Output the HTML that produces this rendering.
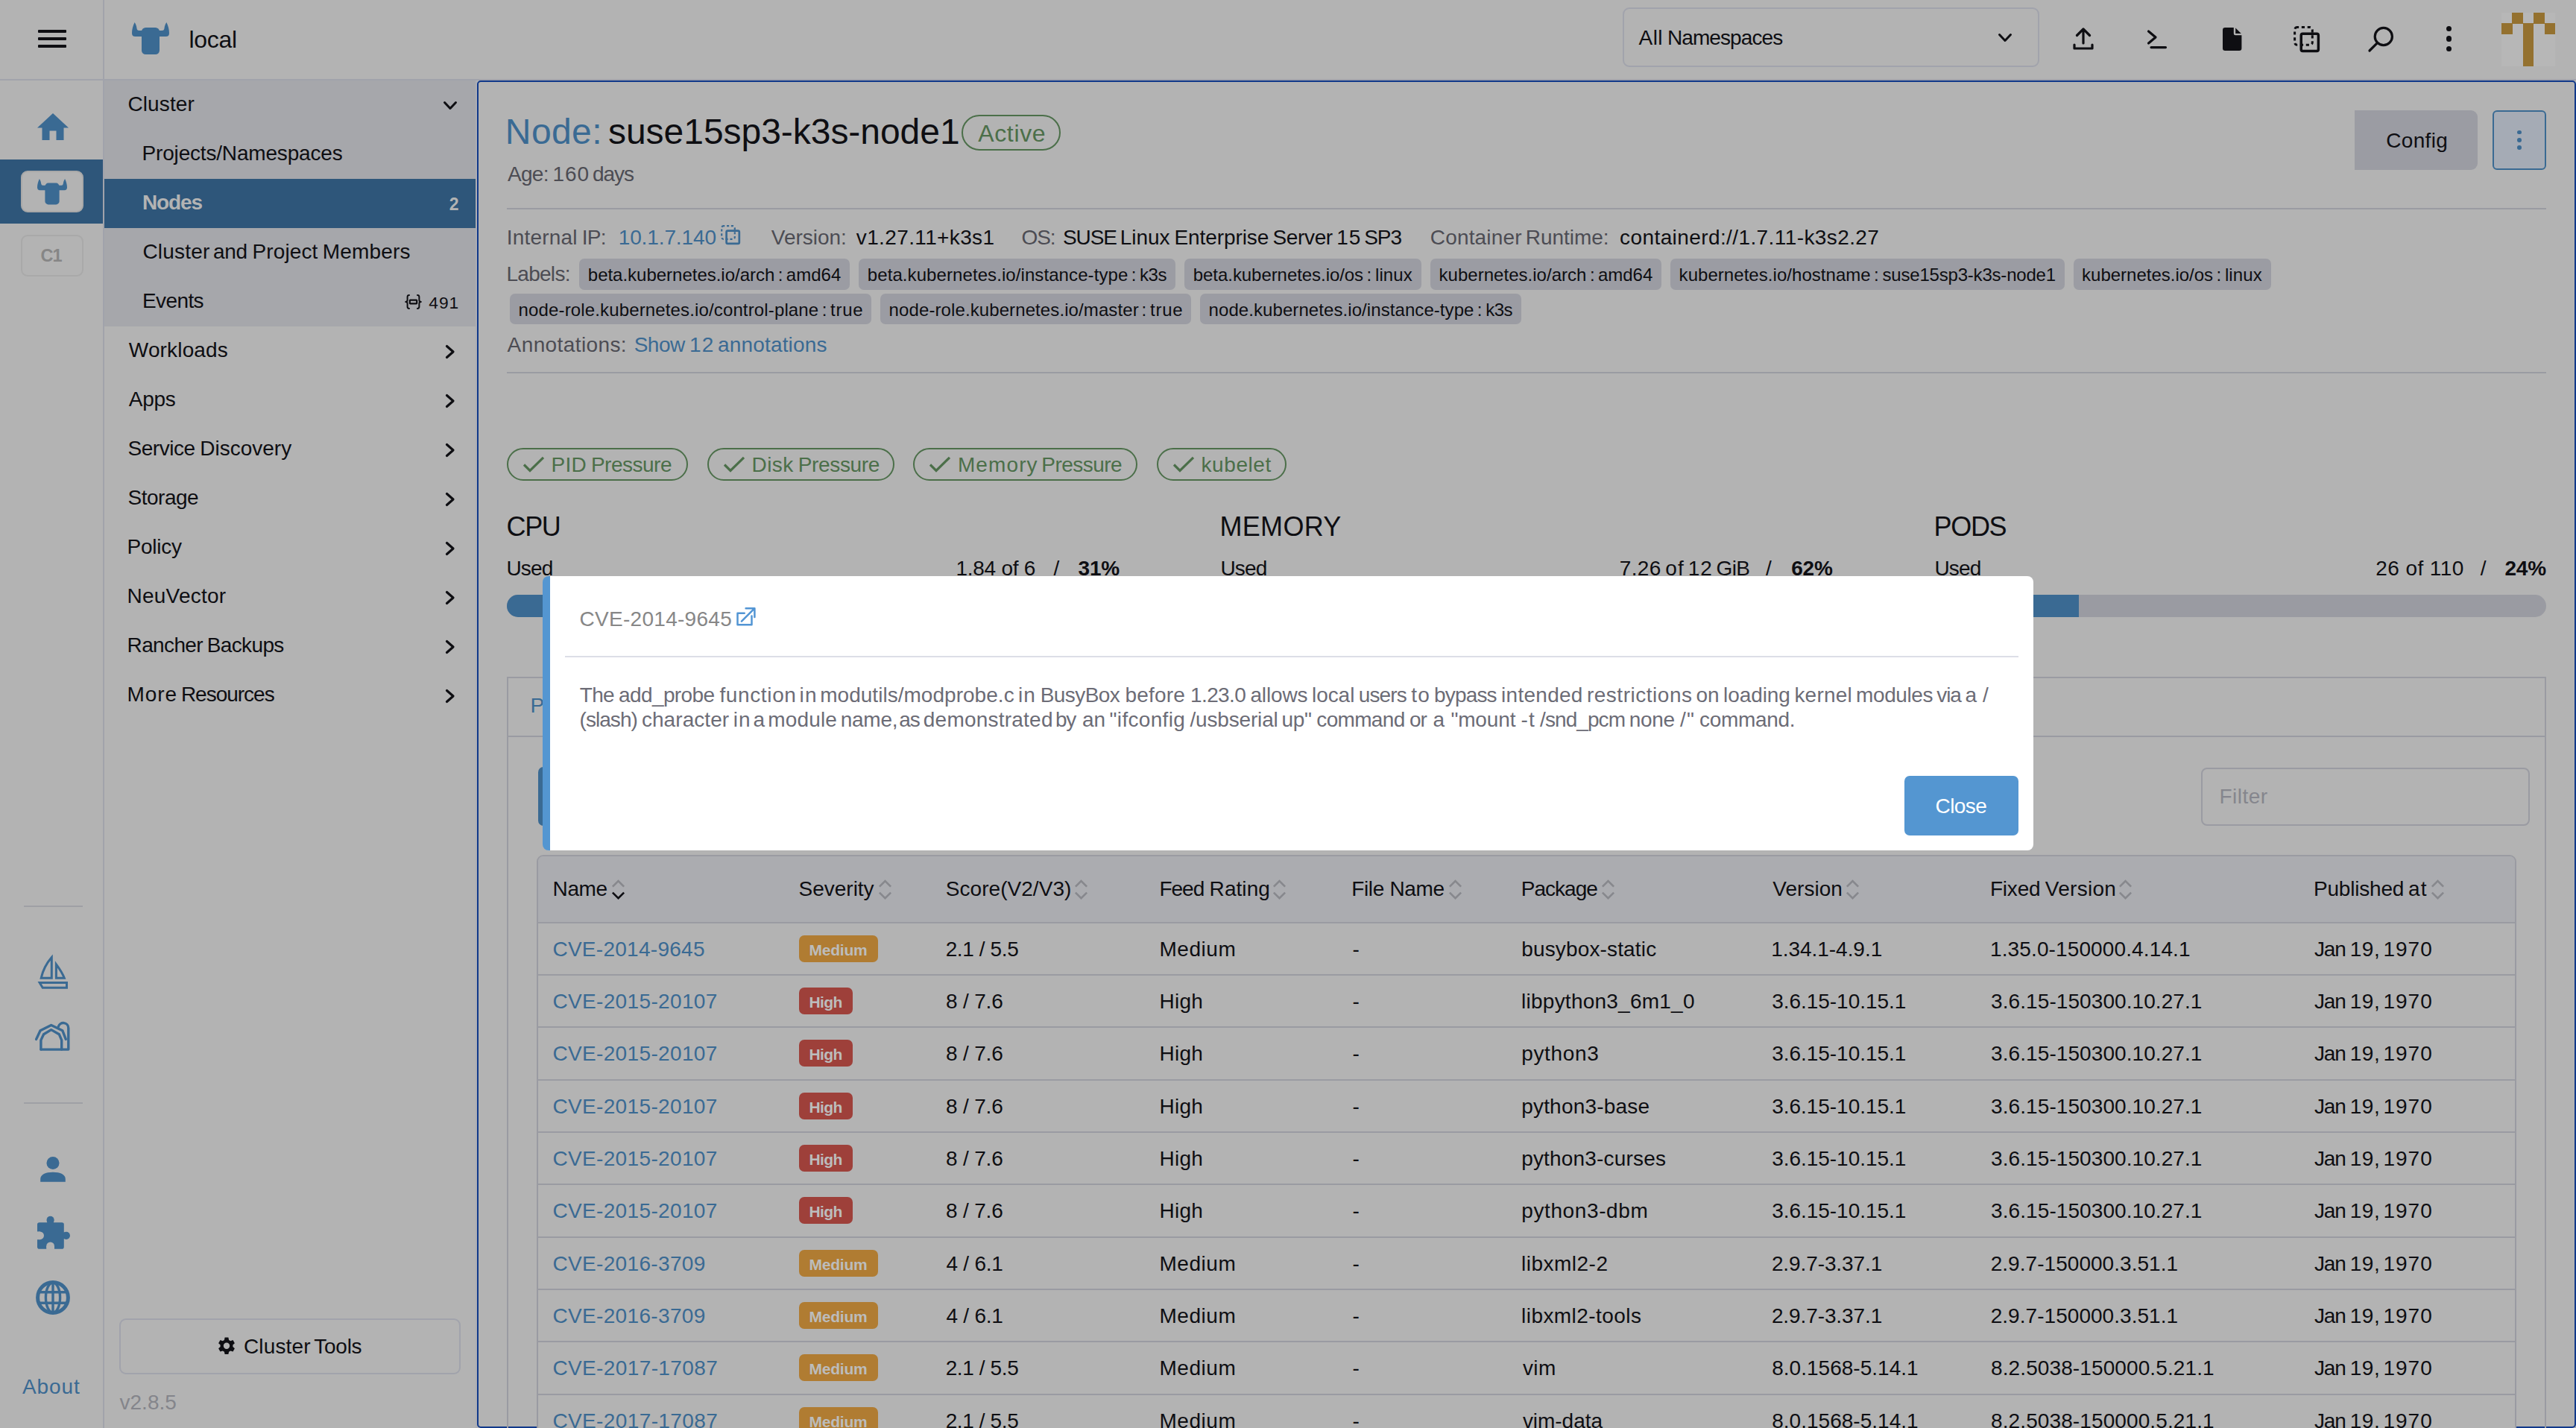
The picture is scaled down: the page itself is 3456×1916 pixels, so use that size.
<!DOCTYPE html>
<html lang="en">
<head>
<meta charset="utf-8">
<title>Rancher - Node: suse15sp3-k3s-node1</title>
<style>
html,body{margin:0;padding:0;}
body{width:3456px;height:1916px;overflow:hidden;background:#b3b3b3;position:relative;
font-family:"Liberation Sans",sans-serif;color:#0e0e12;-webkit-font-smoothing:antialiased;}
#app,#app div,#app span,#app a,#app svg,#app p,#app h1,#app h3,#app button,#app nav,#app header,#app aside,#app main,#app section,#app ul,#app li{position:absolute;margin:0;padding:0;box-sizing:border-box;}
#app{left:0;top:0;width:3456px;height:1916px;overflow:hidden;}
#app span,#app a,#app p,#app h1,#app h3,#app li,#app button{white-space:pre;line-height:1;text-decoration:none;display:block;}
#app h1,#app h3,#app button{font-weight:400;}
#app button{border:0;background:none;font-family:inherit;}
#app ul{list-style:none;}
svg{overflow:visible;}
</style>
</head>
<body>
<div id="app">
<aside style="left:0;top:0;width:140px;height:1916px;border-right:2px solid #a1a3ab;">
<div style="left:51px;top:40px;width:38px;height:4px;background:#0e0e12;border-radius:1px;"></div>
<div style="left:51px;top:50px;width:38px;height:4px;background:#0e0e12;border-radius:1px;"></div>
<div style="left:51px;top:60px;width:38px;height:4px;background:#0e0e12;border-radius:1px;"></div>
<svg style="left:50px;top:152px;" width="42" height="36" viewBox="0 0 42 36"><path d="M21,0 L42,19.5 L35.5,19.5 L35.5,36 L25.5,36 L25.5,23.5 L16.5,23.5 L16.5,36 L6.5,36 L6.5,19.5 L0,19.5 Z" fill="#3a6a93"/></svg>
<div style="left:0px;top:214px;width:138px;height:86px;background:#2e567a;"></div>
<div style="left:28px;top:229px;width:84px;height:56px;background:#b3b3b3;border:2px solid #a8a8a8;border-radius:9px;"></div>
<svg style="left:50px;top:240px;" width="40" height="34.4" viewBox="0 0 50 43"><g fill="#3a6a93"><rect x="13" y="7" width="24" height="36" rx="5.5"/><path d="M3.6,0 C1.4,4.5 0,9.5 0,14.5 Q0,19 4.5,19 L14,19 L14,11 L9.5,11 Q6.8,11 6.5,8 C6.2,5 5.2,2.2 3.6,0 Z"/><path d="M46.4,0 C48.6,4.5 50,9.5 50,14.5 Q50,19 45.5,19 L36,19 L36,11 L40.5,11 Q43.2,11 43.5,8 C43.8,5 44.8,2.2 46.4,0 Z"/></g></svg>
<div style="left:28px;top:315px;width:84px;height:56px;border:2px solid #a9a9a9;border-radius:9px;"></div>
<span style="left:54.4px;top:331.7px;font-size:23.5px;color:#868686;letter-spacing:-0.940px;font-weight:700;">C1</span>
<div style="left:32px;top:1215px;width:79px;height:2px;background:#9fa0a5;"></div>
<div style="left:32px;top:1479px;width:79px;height:2px;background:#9fa0a5;"></div>
<svg style="left:48px;top:1278px;" width="46" height="52" viewBox="0 0 46 52"><g fill="none" stroke="#3a6a93" stroke-width="3" stroke-linejoin="miter"><path d="M21.3,6.5 C13,16 9,26 7.2,34.3 L21.3,34.3 Z"/><path d="M27.4,15.8 C32,22 36,28 38.3,34.3 L27.4,34.3 Z"/><path d="M5.2,40.6 L41.5,40.6 L41.5,47.2 L9.2,47.2 Z"/></g></svg>
<svg style="left:44px;top:1366px;" width="54" height="48" viewBox="0 0 54 48"><g fill="none" stroke="#3a6a93" stroke-width="3.4" stroke-linecap="round" stroke-linejoin="round"><path d="M4.6,28.4 L10.1,16.7 L24.7,9.5 L39.8,16.7 L44.3,28.4"/><path d="M10.9,42.1 L10.9,29.6 L14.6,21.7 L24.7,15.6 L35.3,21.7 L38.7,29.6 L38.7,42.1"/><path d="M34.3,11.4 A6.9,6.9 0 0 1 47.8,13.4 L47.8,42.1 L10.9,42.1"/></g></svg>
<svg style="left:53px;top:1550px;" width="36" height="38" viewBox="0 0 36 38"><g fill="#3a6a93"><circle cx="18" cy="10.6" r="8.5"/><path d="M1.2,35.8 L1.2,32 C1.2,26 8,22.8 18,22.8 C28,22.8 34.8,26 34.8,32 L34.8,35.8 Z"/></g></svg>
<svg style="left:48px;top:1630px;" width="48" height="48" viewBox="0 0 48 48"><g fill="#3a6a93"><rect x="2" y="10.3" width="35.8" height="35.4" rx="2.8"/><circle cx="19.6" cy="6.9" r="5.1"/><rect x="15.3" y="7" width="8.6" height="5"/><circle cx="40.9" cy="27.8" r="5.1"/><rect x="36" y="23.5" width="5" height="8.6"/></g><g fill="#b3b3b3"><circle cx="5.6" cy="27.8" r="5.4"/><rect x="1" y="22.4" width="4.6" height="10.8"/><circle cx="19.6" cy="41.9" r="5.4"/><rect x="14.2" y="41.9" width="10.8" height="4.8"/></g></svg>
<svg style="left:47px;top:1717px;" width="48" height="48" viewBox="0 0 48 48"><g fill="none" stroke="#3a6a93"><circle cx="24" cy="24" r="20.4" stroke-width="5"/><ellipse cx="24" cy="24" rx="9.6" ry="20" stroke-width="3.4"/><path d="M24,4 L24,44 M5,16.8 L43,16.8 M5,31.2 L43,31.2" stroke-width="3.4"/></g></svg>
<a style="left:30.0px;top:1846.9px;font-size:28px;color:#3a6a93;letter-spacing:0.928px;">About</a>
</aside>
<header style="left:140px;top:0;width:3316px;height:108px;border-bottom:2px solid #a1a3ab;"></header>
<div style="left:0px;top:106px;width:140px;height:2px;background:#a1a3ab;"></div>
<svg style="left:177px;top:30px;" width="50" height="43" viewBox="0 0 50 43"><g fill="#3a6a93"><rect x="13" y="7" width="24" height="36" rx="5.5"/><path d="M3.6,0 C1.4,4.5 0,9.5 0,14.5 Q0,19 4.5,19 L14,19 L14,11 L9.5,11 Q6.8,11 6.5,8 C6.2,5 5.2,2.2 3.6,0 Z"/><path d="M46.4,0 C48.6,4.5 50,9.5 50,14.5 Q50,19 45.5,19 L36,19 L36,11 L40.5,11 Q43.2,11 43.5,8 C43.8,5 44.8,2.2 46.4,0 Z"/></g></svg>
<span style="left:253.4px;top:36.9px;font-size:32px;color:#0e0e12;letter-spacing:-0.260px;">local</span>
<div style="left:2177px;top:10px;width:559px;height:80px;border:2px solid #a1a3ac;border-radius:9px;"></div>
<span style="left:0;top:0;font-size:28px;color:#0e0e12;"><span style="left:2198.5px;top:37.3px;letter-spacing:0.465px;">All </span><span style="left:2236.9px;top:37.3px;letter-spacing:-0.899px;">Namespaces</span></span>
<svg style="left:2680.5px;top:45.0px;" width="18" height="11" viewBox="0 0 18 11"><path d="M1.5,1.5 L9.0,9.5 L16.5,1.5" fill="none" stroke="#0e0e12" stroke-width="3" stroke-linecap="round" stroke-linejoin="round"/></svg>
<svg style="left:2781px;top:36px;" width="28" height="32" viewBox="0 0 28 32"><path fill="none" stroke="#0e0e12" stroke-width="3.2" stroke-linecap="round" stroke-linejoin="round" d="M14,22 L14,3.5 M5.5,11.5 L14,3 L22.5,11.5 M2,24 L2,29 L26,29 L26,24"/></svg>
<svg style="left:2880px;top:39px;" width="28" height="28" viewBox="0 0 28 28"><path fill="none" stroke="#0e0e12" stroke-width="3.2" stroke-linecap="round" stroke-linejoin="round" d="M2.5,3 L12,11 L2.5,19 M6,24.6 L25.5,24.6"/></svg>
<svg style="left:2982px;top:37px;" width="26" height="31" viewBox="0 0 26 31"><path fill="#0e0e12" d="M3.2,0 L14.8,0 L14.8,8 Q14.8,10.2 17,10.2 L25.4,10.2 L25.4,27.8 Q25.4,31 22.2,31 L3.2,31 Q0,31 0,27.8 L0,3.2 Q0,0 3.2,0 Z M17.2,0.6 L24.8,8 L17.2,8 Z"/></svg>
<svg style="left:3077px;top:35px;" width="35" height="35" viewBox="0 0 26 26"><g fill="none" stroke="#0e0e12" stroke-width="2.23" stroke-linejoin="round"><rect x="1.2" y="1.2" width="17.6" height="17.6" rx="2.5" stroke-dasharray="3.1 2.75" stroke-dashoffset="1.5" stroke-linecap="butt"/></g><rect x="6.4" y="6.4" width="19.6" height="19.6" fill="none"/><rect x="7.6" y="7.6" width="17.2" height="17.2" rx="1.6" fill="none" stroke="#0e0e12" stroke-width="2.60"/></svg>
<svg style="left:3177px;top:35px;" width="35" height="35" viewBox="0 0 35 35"><g fill="none" stroke="#0e0e12" stroke-width="3.2" stroke-linecap="round" stroke-linejoin="round" stroke-width="3.6"><circle cx="20.8" cy="14" r="11.6"/><path d="M12.4,22.6 L2,33"/></g></svg>
<div style="left:3282px;top:35.199999999999996px;width:7.2px;height:7.2px;background:#0e0e12;border-radius:50%;"></div>
<div style="left:3282px;top:48.4px;width:7.2px;height:7.2px;background:#0e0e12;border-radius:50%;"></div>
<div style="left:3282px;top:61.6px;width:7.2px;height:7.2px;background:#0e0e12;border-radius:50%;"></div>
<div style="left:3356px;top:17px;width:72px;height:72px;background:#b7b7b7;"></div>
<div style="left:3370.4px;top:17.0px;width:14.6px;height:14.6px;background:#94712f;"></div>
<div style="left:3399.2px;top:17.0px;width:14.6px;height:14.6px;background:#94712f;"></div>
<div style="left:3356.0px;top:31.4px;width:14.6px;height:14.6px;background:#94712f;"></div>
<div style="left:3384.8px;top:31.4px;width:14.6px;height:14.6px;background:#94712f;"></div>
<div style="left:3413.6px;top:31.4px;width:14.6px;height:14.6px;background:#94712f;"></div>
<div style="left:3384.8px;top:45.8px;width:14.6px;height:14.6px;background:#94712f;"></div>
<div style="left:3384.8px;top:60.2px;width:14.6px;height:14.6px;background:#94712f;"></div>
<div style="left:3384.8px;top:74.6px;width:14.6px;height:14.6px;background:#94712f;"></div>
<nav style="left:140px;top:108px;width:498px;height:1808px;">
</nav>
<div style="left:140px;top:108px;width:498px;height:330px;background:#a6a7ab;"></div>
<div style="left:638px;top:108px;width:2px;height:1808px;background:#adaeb4;"></div>
<h3 style="left:171.4px;top:126.3px;font-size:28px;color:#0e0e12;letter-spacing:0.127px;">Cluster</h3>
<svg style="left:595.0px;top:136.0px;" width="18" height="11" viewBox="0 0 18 11"><path d="M1.5,1.5 L9.0,9.5 L16.5,1.5" fill="none" stroke="#0e0e12" stroke-width="3" stroke-linecap="round" stroke-linejoin="round"/></svg>
<a style="left:190.6px;top:192.3px;font-size:28px;color:#0e0e12;letter-spacing:-0.183px;">Projects/Namespaces</a>
<div style="left:140px;top:240px;width:498px;height:66px;background:#2e567a;"></div>
<a style="left:191.0px;top:258.3px;font-size:28px;color:#b3b3b3;letter-spacing:-1.120px;font-weight:700;">Nodes</a>
<span style="left:602.7px;top:262.7px;font-size:23px;color:#b3b3b3;letter-spacing:0.000px;font-weight:700;">2</span>
<a style="left:0;top:0;font-size:28px;color:#0e0e12;"><span style="left:191.4px;top:324.3px;letter-spacing:0.219px;">Cluster </span><span style="left:286.0px;top:324.3px;letter-spacing:-0.310px;">and </span><span style="left:338.4px;top:324.3px;letter-spacing:0.141px;">Project </span><span style="left:432.8px;top:324.3px;letter-spacing:0.182px;">Members</span></a>
<a style="left:191.0px;top:390.1px;font-size:28px;color:#0e0e12;letter-spacing:-0.596px;">Events</a>
<span style="left:575.3px;top:394.5px;font-size:22.8px;color:#0e0e12;letter-spacing:0.912px;">491</span>
<svg style="left:543px;top:395px;" width="23" height="20" viewBox="0 0 23 20"><g fill="none" stroke="#0e0e12" stroke-width="2" stroke-linecap="round" stroke-linejoin="round"><path d="M6,1 Q3.6,1 3.6,3.4 L3.6,7.6 Q3.6,10 1.2,10 Q3.6,10 3.6,12.4 L3.6,16.6 Q3.6,19 6,19"/><path d="M17,1 Q19.4,1 19.4,3.4 L19.4,7.6 Q19.4,10 21.8,10 Q19.4,10 19.4,12.4 L19.4,16.6 Q19.4,19 17,19"/><rect x="6.8" y="7.7" width="9.4" height="4.6" rx="0.6" stroke-width="2.2"/></g></svg>
<h3 style="left:172.8px;top:456.3px;font-size:28px;color:#0e0e12;letter-spacing:0.161px;">Workloads</h3>
<svg style="left:598px;top:463px;" width="12" height="18" viewBox="0 0 12 18"><path d="M1.5,1.5 L10,9 L1.5,16.5" fill="none" stroke="#0e0e12" stroke-width="3.2" stroke-linecap="round" stroke-linejoin="round"/></svg>
<h3 style="left:172.8px;top:522.3px;font-size:28px;color:#0e0e12;letter-spacing:-0.268px;">Apps</h3>
<svg style="left:598px;top:529px;" width="12" height="18" viewBox="0 0 12 18"><path d="M1.5,1.5 L10,9 L1.5,16.5" fill="none" stroke="#0e0e12" stroke-width="3.2" stroke-linecap="round" stroke-linejoin="round"/></svg>
<h3 style="left:0;top:0;font-size:28px;color:#0e0e12;"><span style="left:171.5px;top:588.3px;letter-spacing:-0.456px;">Service </span><span style="left:268.2px;top:588.3px;letter-spacing:0.004px;">Discovery</span></h3>
<svg style="left:598px;top:595px;" width="12" height="18" viewBox="0 0 12 18"><path d="M1.5,1.5 L10,9 L1.5,16.5" fill="none" stroke="#0e0e12" stroke-width="3.2" stroke-linecap="round" stroke-linejoin="round"/></svg>
<h3 style="left:171.5px;top:654.3px;font-size:28px;color:#0e0e12;letter-spacing:-0.494px;">Storage</h3>
<svg style="left:598px;top:661px;" width="12" height="18" viewBox="0 0 12 18"><path d="M1.5,1.5 L10,9 L1.5,16.5" fill="none" stroke="#0e0e12" stroke-width="3.2" stroke-linecap="round" stroke-linejoin="round"/></svg>
<h3 style="left:170.6px;top:720.3px;font-size:28px;color:#0e0e12;letter-spacing:-0.251px;">Policy</h3>
<svg style="left:598px;top:727px;" width="12" height="18" viewBox="0 0 12 18"><path d="M1.5,1.5 L10,9 L1.5,16.5" fill="none" stroke="#0e0e12" stroke-width="3.2" stroke-linecap="round" stroke-linejoin="round"/></svg>
<h3 style="left:170.6px;top:786.3px;font-size:28px;color:#0e0e12;letter-spacing:0.210px;">NeuVector</h3>
<svg style="left:598px;top:793px;" width="12" height="18" viewBox="0 0 12 18"><path d="M1.5,1.5 L10,9 L1.5,16.5" fill="none" stroke="#0e0e12" stroke-width="3.2" stroke-linecap="round" stroke-linejoin="round"/></svg>
<h3 style="left:0;top:0;font-size:28px;color:#0e0e12;"><span style="left:170.6px;top:852.3px;letter-spacing:-0.644px;">Rancher </span><span style="left:277.7px;top:852.3px;letter-spacing:-0.618px;">Backups</span></h3>
<svg style="left:598px;top:859px;" width="12" height="18" viewBox="0 0 12 18"><path d="M1.5,1.5 L10,9 L1.5,16.5" fill="none" stroke="#0e0e12" stroke-width="3.2" stroke-linecap="round" stroke-linejoin="round"/></svg>
<h3 style="left:0;top:0;font-size:28px;color:#0e0e12;"><span style="left:170.6px;top:918.3px;letter-spacing:0.903px;">More </span><span style="left:242.9px;top:918.3px;letter-spacing:-1.008px;">Resources</span></h3>
<svg style="left:598px;top:925px;" width="12" height="18" viewBox="0 0 12 18"><path d="M1.5,1.5 L10,9 L1.5,16.5" fill="none" stroke="#0e0e12" stroke-width="3.2" stroke-linecap="round" stroke-linejoin="round"/></svg>
<div style="left:160px;top:1769px;width:458px;height:75px;border:2px solid #a1a3ac;border-radius:9px;"></div>
<svg style="left:292px;top:1794px;" width="24" height="24" viewBox="0 0 24 24"><path fill="#0e0e12" fill-rule="evenodd" d="M9.6,0.6 L14.4,0.6 L15.1,3.9 L17.3,5.2 L20.5,4.1 L22.9,8.3 L20.4,10.5 L20.4,13.1 L22.9,15.3 L20.5,19.5 L17.3,18.4 L15.1,19.7 L14.4,23 L9.6,23 L8.9,19.7 L6.7,18.4 L3.5,19.5 L1.1,15.3 L3.6,13.1 L3.6,10.5 L1.1,8.3 L3.5,4.1 L6.7,5.2 L8.9,3.9 Z M12,7.6 A4.2,4.2 0 1 0 12,16 A4.2,4.2 0 1 0 12,7.6 Z"/></svg>
<span style="left:0;top:0;font-size:28px;color:#0e0e12;"><span style="left:327.0px;top:1793.1px;letter-spacing:0.127px;">Cluster </span><span style="left:421.2px;top:1793.1px;letter-spacing:-0.234px;">Tools</span></span>
<span style="left:160.5px;top:1868.3px;font-size:28px;color:#84858b;letter-spacing:0.010px;">v2.8.5</span>
<main style="left:640px;top:108px;width:2816px;height:1808px;border:2px solid #11398a;border-radius:5px;"></main>
<h1 style="left:677.8px;top:153.4px;font-size:48px;color:#3a6a93;letter-spacing:0.421px;">Node:</h1>
<h1 style="left:816.0px;top:153.4px;font-size:48px;color:#0e0e12;letter-spacing:-0.038px;">suse15sp3-k3s-node1</h1>
<div style="left:1290px;top:154px;width:133px;height:48px;border:2px solid #4b6f49;border-radius:24px;"></div>
<span style="left:1312.2px;top:162.9px;font-size:32px;color:#4b6f49;letter-spacing:0.659px;">Active</span>
<span style="left:0;top:0;font-size:28px;color:#4c4c53;"><span style="left:681.0px;top:219.8px;letter-spacing:-0.713px;">Age: </span><span style="left:741.5px;top:219.8px;letter-spacing:0.913px;">160 </span><span style="left:795.1px;top:219.8px;letter-spacing:-1.120px;">days</span></span>
<button style="left:3159px;top:148px;width:165px;height:80px;background:#9b9ca3;border-radius:0 9px 9px 0;"></button>
<span style="left:3201.2px;top:174.9px;font-size:28px;color:#0e0e12;letter-spacing:0.328px;">Config</span>
<button style="left:3344px;top:148px;width:72px;height:80px;background:#a5abb5;border:2px solid #3a6a93;border-radius:6px;"></button>
<div style="left:3377.1px;top:174.7px;width:5.8px;height:5.8px;background:#3a6a93;border-radius:50%;"></div>
<div style="left:3377.1px;top:185.0px;width:5.8px;height:5.8px;background:#3a6a93;border-radius:50%;"></div>
<div style="left:3377.1px;top:195.29999999999998px;width:5.8px;height:5.8px;background:#3a6a93;border-radius:50%;"></div>
<div style="left:680px;top:279px;width:2736px;height:2px;background:#9a9ba2;"></div>
<span style="left:0;top:0;font-size:28px;color:#4c4c53;"><span style="left:679.7px;top:304.5px;letter-spacing:0.214px;">Internal </span><span style="left:780.7px;top:304.5px;letter-spacing:-0.745px;">IP:</span></span>
<a style="left:829.7px;top:304.5px;font-size:28px;color:#3a6a93;letter-spacing:-0.113px;">10.1.7.140</a>
<svg style="left:967px;top:302px;" width="26" height="26" viewBox="0 0 26 26"><g fill="none" stroke="#3a6a93" stroke-width="2.20" stroke-linejoin="round"><rect x="1.2" y="1.2" width="17.6" height="17.6" rx="2.5" stroke-dasharray="3.1 2.75" stroke-dashoffset="1.5" stroke-linecap="butt"/></g><rect x="6.4" y="6.4" width="19.6" height="19.6" fill="none"/><rect x="7.6" y="7.6" width="17.2" height="17.2" rx="1.6" fill="none" stroke="#3a6a93" stroke-width="2.70"/></svg>
<span style="left:1034.8px;top:304.5px;font-size:28px;color:#4c4c53;letter-spacing:-0.013px;">Version:</span>
<span style="left:1148.8px;top:304.5px;font-size:28px;color:#0e0e12;letter-spacing:0.368px;">v1.27.11+k3s1</span>
<span style="left:1370.5px;top:304.5px;font-size:28px;color:#4c4c53;letter-spacing:-1.120px;">OS:</span>
<span style="left:0;top:0;font-size:28px;color:#0e0e12;"><span style="left:1426.0px;top:304.5px;letter-spacing:-1.120px;">SUSE </span><span style="left:1502.7px;top:304.5px;letter-spacing:-0.030px;">Linux </span><span style="left:1575.4px;top:304.5px;letter-spacing:-0.080px;">Enterprise </span><span style="left:1707.5px;top:304.5px;letter-spacing:-0.355px;">Server </span><span style="left:1793.3px;top:304.5px;letter-spacing:0.881px;">15 </span><span style="left:1830.3px;top:304.5px;letter-spacing:-1.120px;">SP3</span></span>
<span style="left:0;top:0;font-size:28px;color:#4c4c53;"><span style="left:1918.8px;top:304.5px;letter-spacing:0.162px;">Container </span><span style="left:2046.8px;top:304.5px;letter-spacing:-0.039px;">Runtime:</span></span>
<span style="left:2173.1px;top:304.5px;font-size:28px;color:#0e0e12;letter-spacing:0.405px;">containerd://1.7.11-k3s2.27</span>
<span style="left:679.4px;top:354.3px;font-size:28px;color:#4c4c53;letter-spacing:-0.703px;">Labels:</span>
<div style="left:777px;top:347px;width:363px;height:42px;background:#9b9ca3;border-radius:7px;"></div>
<span style="left:0;top:0;font-size:24px;color:#0e0e12;"><span style="left:788.8px;top:356.9px;letter-spacing:-0.015px;">beta.kubernetes.io/arch </span><span style="left:1043.8px;top:356.9px;letter-spacing:0.000px;">: </span><span style="left:1054.8px;top:356.9px;letter-spacing:0.015px;">amd64</span></span>
<div style="left:1152px;top:347px;width:425px;height:42px;background:#9b9ca3;border-radius:7px;"></div>
<span style="left:0;top:0;font-size:24px;color:#0e0e12;"><span style="left:1163.8px;top:356.9px;letter-spacing:0.083px;">beta.kubernetes.io/instance-type </span><span style="left:1517.7px;top:356.9px;letter-spacing:0.000px;">: </span><span style="left:1529.1px;top:356.9px;letter-spacing:-0.471px;">k3s</span></span>
<div style="left:1589px;top:347px;width:318px;height:42px;background:#9b9ca3;border-radius:7px;"></div>
<span style="left:0;top:0;font-size:24px;color:#0e0e12;"><span style="left:1600.8px;top:356.9px;letter-spacing:-0.059px;">beta.kubernetes.io/os </span><span style="left:1833.6px;top:356.9px;letter-spacing:0.000px;">: </span><span style="left:1844.9px;top:356.9px;letter-spacing:0.156px;">linux</span></span>
<div style="left:1919px;top:347px;width:310px;height:42px;background:#9b9ca3;border-radius:7px;"></div>
<span style="left:0;top:0;font-size:24px;color:#0e0e12;"><span style="left:1930.6px;top:356.9px;letter-spacing:0.023px;">kubernetes.io/arch </span><span style="left:2133.0px;top:356.9px;letter-spacing:0.000px;">: </span><span style="left:2144.0px;top:356.9px;letter-spacing:-0.027px;">amd64</span></span>
<div style="left:2241px;top:347px;width:528.5px;height:42px;background:#9b9ca3;border-radius:7px;"></div>
<span style="left:0;top:0;font-size:24px;color:#0e0e12;"><span style="left:2252.6px;top:356.9px;letter-spacing:0.046px;">kubernetes.io/hostname </span><span style="left:2514.1px;top:356.9px;letter-spacing:0.000px;">: </span><span style="left:2525.5px;top:356.9px;letter-spacing:-0.197px;">suse15sp3-k3s-node1</span></span>
<div style="left:2781.5px;top:347px;width:265.5px;height:42px;background:#9b9ca3;border-radius:7px;"></div>
<span style="left:0;top:0;font-size:24px;color:#0e0e12;"><span style="left:2793.1px;top:356.9px;letter-spacing:-0.011px;">kubernetes.io/os </span><span style="left:2973.6px;top:356.9px;letter-spacing:0.000px;">: </span><span style="left:2984.9px;top:356.9px;letter-spacing:0.136px;">linux</span></span>
<div style="left:684px;top:393.5px;width:485px;height:41px;background:#9b9ca3;border-radius:7px;"></div>
<span style="left:0;top:0;font-size:24px;color:#0e0e12;"><span style="left:695.6px;top:403.5px;letter-spacing:0.139px;">node-role.kubernetes.io/control-plane </span><span style="left:1102.7px;top:403.5px;letter-spacing:0.000px;">: </span><span style="left:1114.1px;top:403.5px;letter-spacing:0.742px;">true</span></span>
<div style="left:1181px;top:393.5px;width:417px;height:41px;background:#9b9ca3;border-radius:7px;"></div>
<span style="left:0;top:0;font-size:24px;color:#0e0e12;"><span style="left:1192.6px;top:403.5px;letter-spacing:0.100px;">node-role.kubernetes.io/master </span><span style="left:1531.6px;top:403.5px;letter-spacing:0.000px;">: </span><span style="left:1543.0px;top:403.5px;letter-spacing:0.762px;">true</span></span>
<div style="left:1610px;top:393.5px;width:431px;height:41px;background:#9b9ca3;border-radius:7px;"></div>
<span style="left:0;top:0;font-size:24px;color:#0e0e12;"><span style="left:1621.6px;top:403.5px;letter-spacing:0.074px;">node.kubernetes.io/instance-type </span><span style="left:1981.8px;top:403.5px;letter-spacing:0.000px;">: </span><span style="left:1993.2px;top:403.5px;letter-spacing:-0.491px;">k3s</span></span>
<span style="left:680.6px;top:449.0px;font-size:28px;color:#4c4c53;letter-spacing:0.399px;">Annotations:</span>
<a style="left:0;top:0;font-size:28px;color:#3a6a93;"><span style="left:850.7px;top:449.0px;letter-spacing:-0.524px;">Show </span><span style="left:925.1px;top:449.0px;letter-spacing:1.120px;">12 </span><span style="left:963.0px;top:449.0px;letter-spacing:0.167px;">annotations</span></a>
<div style="left:680px;top:499px;width:2736px;height:2px;background:#9a9ba2;"></div>
<div style="left:680px;top:601px;width:243px;height:44px;border:2px solid #4b6f49;border-radius:22px;"></div>
<svg style="left:701px;top:612px;" width="30" height="22" viewBox="0 0 30 22"><path d="M2,11.5 L10,19.5 L28,1.8" fill="none" stroke="#4b6f49" stroke-width="3.2" stroke-linecap="butt" stroke-linejoin="miter"/></svg>
<span style="left:0;top:0;font-size:28px;color:#4b6f49;"><span style="left:739.5px;top:610.3px;letter-spacing:0.253px;">PID </span><span style="left:792.9px;top:610.3px;letter-spacing:-0.488px;">Pressure</span></span>
<div style="left:949px;top:601px;width:251px;height:44px;border:2px solid #4b6f49;border-radius:22px;"></div>
<svg style="left:970px;top:612px;" width="30" height="22" viewBox="0 0 30 22"><path d="M2,11.5 L10,19.5 L28,1.8" fill="none" stroke="#4b6f49" stroke-width="3.2" stroke-linecap="butt" stroke-linejoin="miter"/></svg>
<span style="left:0;top:0;font-size:28px;color:#4b6f49;"><span style="left:1008.5px;top:610.3px;letter-spacing:0.463px;">Disk </span><span style="left:1070.8px;top:610.3px;letter-spacing:-0.372px;">Pressure</span></span>
<div style="left:1225.4px;top:601px;width:300.2px;height:44px;border:2px solid #4b6f49;border-radius:22px;"></div>
<svg style="left:1246.4px;top:612px;" width="30" height="22" viewBox="0 0 30 22"><path d="M2,11.5 L10,19.5 L28,1.8" fill="none" stroke="#4b6f49" stroke-width="3.2" stroke-linecap="butt" stroke-linejoin="miter"/></svg>
<span style="left:0;top:0;font-size:28px;color:#4b6f49;"><span style="left:1284.9px;top:610.3px;letter-spacing:1.120px;">Memory </span><span style="left:1397.3px;top:610.3px;letter-spacing:-0.521px;">Pressure</span></span>
<div style="left:1551.6px;top:601px;width:174.4px;height:44px;border:2px solid #4b6f49;border-radius:22px;"></div>
<svg style="left:1572.6px;top:612px;" width="30" height="22" viewBox="0 0 30 22"><path d="M2,11.5 L10,19.5 L28,1.8" fill="none" stroke="#4b6f49" stroke-width="3.2" stroke-linecap="butt" stroke-linejoin="miter"/></svg>
<span style="left:1611.5px;top:610.3px;font-size:28px;color:#4b6f49;letter-spacing:0.577px;">kubelet</span>
<h3 style="left:679.6px;top:688.5px;font-size:36px;color:#0e0e12;letter-spacing:-1.440px;">CPU</h3>
<span style="left:679.5px;top:748.8px;font-size:28px;color:#0e0e12;letter-spacing:-0.887px;">Used</span>
<span style="left:1282.4px;top:748.8px;font-size:28px;color:#0e0e12;letter-spacing:-0.250px;">1.84 of 6</span>
<span style="left:1413.4px;top:748.8px;font-size:28px;color:#0e0e12;letter-spacing:0.000px;">/</span>
<span style="left:1446.6px;top:748.8px;font-size:28px;color:#0e0e12;letter-spacing:-0.238px;font-weight:700;">31%</span>
<div style="left:680px;top:798px;width:820px;height:30px;background:#9a9ba2;border-radius:15px;overflow:hidden;"><div style="left:0;top:0;height:30px;width:251.5px;background:#3a6a93;"></div></div>
<h3 style="left:1636.5px;top:688.5px;font-size:36px;color:#0e0e12;letter-spacing:0.306px;">MEMORY</h3>
<span style="left:1637.5px;top:748.8px;font-size:28px;color:#0e0e12;letter-spacing:-0.887px;">Used</span>
<span style="left:0;top:0;font-size:28px;color:#0e0e12;"><span style="left:2172.8px;top:748.8px;letter-spacing:0.321px;">7.26 </span><span style="left:2234.2px;top:748.8px;letter-spacing:1.120px;">of </span><span style="left:2264.7px;top:748.8px;letter-spacing:1.047px;">12 </span><span style="left:2302.6px;top:748.8px;letter-spacing:-0.650px;">GiB</span></span>
<span style="left:2369.1px;top:748.8px;font-size:28px;color:#0e0e12;letter-spacing:0.000px;">/</span>
<span style="left:2403.2px;top:748.8px;font-size:28px;color:#0e0e12;letter-spacing:-0.170px;font-weight:700;">62%</span>
<div style="left:1638px;top:798px;width:820px;height:30px;background:#9a9ba2;border-radius:15px;overflow:hidden;"><div style="left:0;top:0;height:30px;width:508.4px;background:#3a6a93;"></div></div>
<h3 style="left:2594.5px;top:688.5px;font-size:36px;color:#0e0e12;letter-spacing:-1.310px;">PODS</h3>
<span style="left:2595.5px;top:748.8px;font-size:28px;color:#0e0e12;letter-spacing:-0.887px;">Used</span>
<span style="left:3187.3px;top:748.8px;font-size:28px;color:#0e0e12;letter-spacing:0.402px;">26 of 110</span>
<span style="left:3327.8px;top:748.8px;font-size:28px;color:#0e0e12;letter-spacing:0.000px;">/</span>
<span style="left:3360.4px;top:748.8px;font-size:28px;color:#0e0e12;letter-spacing:-0.169px;font-weight:700;">24%</span>
<div style="left:2596px;top:798px;width:820px;height:30px;background:#9a9ba2;border-radius:15px;overflow:hidden;"><div style="left:0;top:0;height:30px;width:192.7px;background:#3a6a93;"></div></div>
<div style="left:680px;top:908px;width:2736px;height:1100px;border:2px solid #9a9ba2;"></div>
<div style="left:680px;top:987px;width:2736px;height:2px;background:#9a9ba2;"></div>
<a style="left:711.5px;top:933.3px;font-size:28px;color:#3a6a93;letter-spacing:-1.120px;">Pods</a>
<button style="left:722px;top:1029px;width:260px;height:79px;background:#3a6a93;border-radius:7px;"></button>
<span style="left:0;top:0;font-size:28px;color:#b3b3b3;"><span style="left:759.8px;top:1054.8px;letter-spacing:0.409px;">Download </span><span style="left:892.0px;top:1054.8px;letter-spacing:-1.120px;">CSV</span></span>
<div style="left:2953px;top:1030px;width:441px;height:78px;border:2px solid #9a9ba2;border-radius:8px;"></div>
<span style="left:2977.4px;top:1055.3px;font-size:28px;color:#85868d;letter-spacing:0.512px;">Filter</span>
<div style="left:720px;top:1147px;width:2656px;height:800px;border:2px solid #9a9ba2;border-radius:9px;background:#b3b3b3;overflow:hidden;"><div style="left:0;top:0;width:2656px;height:88px;background:#abacb0;"></div></div>
<span style="left:741.6px;top:1179.3px;font-size:28px;color:#0e0e12;letter-spacing:-0.387px;">Name</span>
<svg style="left:819.7px;top:1179.5px;" width="19" height="28" viewBox="0 0 19 28"><g fill="none" stroke-width="2.6" stroke-linecap="butt" stroke-linejoin="miter"><path d="M1.9,9.6 L9.5,2 L17.1,9.6" stroke="#87888d"/><path d="M1.9,17.6 L9.5,25.2 L17.1,17.6" stroke="#0e0e12"/></g></svg>
<span style="left:1071.6px;top:1179.3px;font-size:28px;color:#0e0e12;letter-spacing:-0.017px;">Severity</span>
<svg style="left:1178.3px;top:1179.5px;" width="19" height="28" viewBox="0 0 19 28"><g fill="none" stroke-width="2.6" stroke-linecap="butt" stroke-linejoin="miter"><path d="M1.9,9.6 L9.5,2 L17.1,9.6" stroke="#87888d"/><path d="M1.9,17.6 L9.5,25.2 L17.1,17.6" stroke="#87888d"/></g></svg>
<span style="left:1268.8px;top:1179.3px;font-size:28px;color:#0e0e12;letter-spacing:0.045px;">Score(V2/V3)</span>
<svg style="left:1441.4px;top:1179.5px;" width="19" height="28" viewBox="0 0 19 28"><g fill="none" stroke-width="2.6" stroke-linecap="butt" stroke-linejoin="miter"><path d="M1.9,9.6 L9.5,2 L17.1,9.6" stroke="#87888d"/><path d="M1.9,17.6 L9.5,25.2 L17.1,17.6" stroke="#87888d"/></g></svg>
<span style="left:0;top:0;font-size:28px;color:#0e0e12;"><span style="left:1555.5px;top:1179.3px;letter-spacing:-1.031px;">Feed </span><span style="left:1622.6px;top:1179.3px;letter-spacing:0.069px;">Rating</span></span>
<svg style="left:1707.3px;top:1179.5px;" width="19" height="28" viewBox="0 0 19 28"><g fill="none" stroke-width="2.6" stroke-linecap="butt" stroke-linejoin="miter"><path d="M1.9,9.6 L9.5,2 L17.1,9.6" stroke="#87888d"/><path d="M1.9,17.6 L9.5,25.2 L17.1,17.6" stroke="#87888d"/></g></svg>
<span style="left:1813.2px;top:1179.3px;font-size:28px;color:#0e0e12;letter-spacing:-0.335px;">File Name</span>
<svg style="left:1942.5px;top:1179.5px;" width="19" height="28" viewBox="0 0 19 28"><g fill="none" stroke-width="2.6" stroke-linecap="butt" stroke-linejoin="miter"><path d="M1.9,9.6 L9.5,2 L17.1,9.6" stroke="#87888d"/><path d="M1.9,17.6 L9.5,25.2 L17.1,17.6" stroke="#87888d"/></g></svg>
<span style="left:2040.7px;top:1179.3px;font-size:28px;color:#0e0e12;letter-spacing:-0.960px;">Package</span>
<svg style="left:2148.4px;top:1179.5px;" width="19" height="28" viewBox="0 0 19 28"><g fill="none" stroke-width="2.6" stroke-linecap="butt" stroke-linejoin="miter"><path d="M1.9,9.6 L9.5,2 L17.1,9.6" stroke="#87888d"/><path d="M1.9,17.6 L9.5,25.2 L17.1,17.6" stroke="#87888d"/></g></svg>
<span style="left:2378.3px;top:1179.3px;font-size:28px;color:#0e0e12;letter-spacing:0.017px;">Version</span>
<svg style="left:2476.0px;top:1179.5px;" width="19" height="28" viewBox="0 0 19 28"><g fill="none" stroke-width="2.6" stroke-linecap="butt" stroke-linejoin="miter"><path d="M1.9,9.6 L9.5,2 L17.1,9.6" stroke="#87888d"/><path d="M1.9,17.6 L9.5,25.2 L17.1,17.6" stroke="#87888d"/></g></svg>
<span style="left:0;top:0;font-size:28px;color:#0e0e12;"><span style="left:2669.9px;top:1179.3px;letter-spacing:-0.185px;">Fixed </span><span style="left:2743.8px;top:1179.3px;letter-spacing:0.269px;">Version</span></span>
<svg style="left:2841.8px;top:1179.5px;" width="19" height="28" viewBox="0 0 19 28"><g fill="none" stroke-width="2.6" stroke-linecap="butt" stroke-linejoin="miter"><path d="M1.9,9.6 L9.5,2 L17.1,9.6" stroke="#87888d"/><path d="M1.9,17.6 L9.5,25.2 L17.1,17.6" stroke="#87888d"/></g></svg>
<span style="left:0;top:0;font-size:28px;color:#0e0e12;"><span style="left:3104.0px;top:1179.3px;letter-spacing:-0.195px;">Published </span><span style="left:3231.1px;top:1179.3px;letter-spacing:1.026px;">at</span></span>
<svg style="left:3260.8px;top:1179.5px;" width="19" height="28" viewBox="0 0 19 28"><g fill="none" stroke-width="2.6" stroke-linecap="butt" stroke-linejoin="miter"><path d="M1.9,9.6 L9.5,2 L17.1,9.6" stroke="#87888d"/><path d="M1.9,17.6 L9.5,25.2 L17.1,17.6" stroke="#87888d"/></g></svg>
<div style="left:722px;top:1237px;width:2652px;height:2px;background:#9a9ba2;"></div>
<a style="left:741.4px;top:1259.7px;font-size:28px;color:#3a6a93;letter-spacing:0.280px;">CVE-2014-9645</a>
<div style="left:1072px;top:1255px;width:106px;height:36px;background:#b07c32;border-radius:7px;"></div>
<span style="left:1085.6px;top:1264.2px;font-size:21px;color:#bcbcbc;letter-spacing:-0.241px;font-weight:700;">Medium</span>
<span style="left:1268.7px;top:1259.7px;font-size:28px;color:#0e0e12;letter-spacing:-0.388px;">2.1 / 5.5</span>
<span style="left:1555.5px;top:1259.7px;font-size:28px;color:#0e0e12;letter-spacing:0.541px;">Medium</span>
<span style="left:1814.5px;top:1259.7px;font-size:28px;color:#0e0e12;letter-spacing:0.000px;">-</span>
<span style="left:2041.2px;top:1259.7px;font-size:28px;color:#0e0e12;letter-spacing:0.152px;">busybox-static</span>
<span style="left:2376.2px;top:1259.7px;font-size:28px;color:#0e0e12;letter-spacing:-0.038px;">1.34.1-4.9.1</span>
<span style="left:2670.0px;top:1259.7px;font-size:28px;color:#0e0e12;letter-spacing:0.122px;">1.35.0-150000.4.14.1</span>
<span style="left:0;top:0;font-size:28px;color:#0e0e12;"><span style="left:3104.9px;top:1259.7px;letter-spacing:-1.120px;">Jan </span><span style="left:3152.8px;top:1259.7px;letter-spacing:0.502px;">19, </span><span style="left:3197.5px;top:1259.7px;letter-spacing:0.983px;">1970</span></span>
<div style="left:722px;top:1307px;width:2652px;height:2px;background:#9a9ba2;"></div>
<a style="left:741.4px;top:1329.7px;font-size:28px;color:#3a6a93;letter-spacing:0.351px;">CVE-2015-20107</a>
<div style="left:1072px;top:1325px;width:72px;height:36px;background:#9e403a;border-radius:7px;"></div>
<span style="left:1085.6px;top:1334.2px;font-size:21px;color:#bcbcbc;letter-spacing:-0.674px;font-weight:700;">High</span>
<span style="left:1269.0px;top:1329.7px;font-size:28px;color:#0e0e12;letter-spacing:-0.183px;">8 / 7.6</span>
<span style="left:1555.5px;top:1329.7px;font-size:28px;color:#0e0e12;letter-spacing:0.262px;">High</span>
<span style="left:1814.5px;top:1329.7px;font-size:28px;color:#0e0e12;letter-spacing:0.000px;">-</span>
<span style="left:2041.1px;top:1329.7px;font-size:28px;color:#0e0e12;letter-spacing:0.237px;">libpython3_6m1_0</span>
<span style="left:2377.3px;top:1329.7px;font-size:28px;color:#0e0e12;letter-spacing:-0.051px;">3.6.15-10.15.1</span>
<span style="left:2671.1px;top:1329.7px;font-size:28px;color:#0e0e12;letter-spacing:0.076px;">3.6.15-150300.10.27.1</span>
<span style="left:0;top:0;font-size:28px;color:#0e0e12;"><span style="left:3104.9px;top:1329.7px;letter-spacing:-1.120px;">Jan </span><span style="left:3152.8px;top:1329.7px;letter-spacing:0.502px;">19, </span><span style="left:3197.5px;top:1329.7px;letter-spacing:0.983px;">1970</span></span>
<div style="left:722px;top:1377px;width:2652px;height:2px;background:#9a9ba2;"></div>
<a style="left:741.4px;top:1399.7px;font-size:28px;color:#3a6a93;letter-spacing:0.351px;">CVE-2015-20107</a>
<div style="left:1072px;top:1395px;width:72px;height:36px;background:#9e403a;border-radius:7px;"></div>
<span style="left:1085.6px;top:1404.2px;font-size:21px;color:#bcbcbc;letter-spacing:-0.674px;font-weight:700;">High</span>
<span style="left:1269.0px;top:1399.7px;font-size:28px;color:#0e0e12;letter-spacing:-0.183px;">8 / 7.6</span>
<span style="left:1555.5px;top:1399.7px;font-size:28px;color:#0e0e12;letter-spacing:0.262px;">High</span>
<span style="left:1814.5px;top:1399.7px;font-size:28px;color:#0e0e12;letter-spacing:0.000px;">-</span>
<span style="left:2041.2px;top:1399.7px;font-size:28px;color:#0e0e12;letter-spacing:0.666px;">python3</span>
<span style="left:2377.3px;top:1399.7px;font-size:28px;color:#0e0e12;letter-spacing:-0.051px;">3.6.15-10.15.1</span>
<span style="left:2671.1px;top:1399.7px;font-size:28px;color:#0e0e12;letter-spacing:0.076px;">3.6.15-150300.10.27.1</span>
<span style="left:0;top:0;font-size:28px;color:#0e0e12;"><span style="left:3104.9px;top:1399.7px;letter-spacing:-1.120px;">Jan </span><span style="left:3152.8px;top:1399.7px;letter-spacing:0.502px;">19, </span><span style="left:3197.5px;top:1399.7px;letter-spacing:0.983px;">1970</span></span>
<div style="left:722px;top:1448px;width:2652px;height:2px;background:#9a9ba2;"></div>
<a style="left:741.4px;top:1470.7px;font-size:28px;color:#3a6a93;letter-spacing:0.351px;">CVE-2015-20107</a>
<div style="left:1072px;top:1466px;width:72px;height:36px;background:#9e403a;border-radius:7px;"></div>
<span style="left:1085.6px;top:1475.2px;font-size:21px;color:#bcbcbc;letter-spacing:-0.674px;font-weight:700;">High</span>
<span style="left:1269.0px;top:1470.7px;font-size:28px;color:#0e0e12;letter-spacing:-0.183px;">8 / 7.6</span>
<span style="left:1555.5px;top:1470.7px;font-size:28px;color:#0e0e12;letter-spacing:0.262px;">High</span>
<span style="left:1814.5px;top:1470.7px;font-size:28px;color:#0e0e12;letter-spacing:0.000px;">-</span>
<span style="left:2041.2px;top:1470.7px;font-size:28px;color:#0e0e12;letter-spacing:0.195px;">python3-base</span>
<span style="left:2377.3px;top:1470.7px;font-size:28px;color:#0e0e12;letter-spacing:-0.051px;">3.6.15-10.15.1</span>
<span style="left:2671.1px;top:1470.7px;font-size:28px;color:#0e0e12;letter-spacing:0.076px;">3.6.15-150300.10.27.1</span>
<span style="left:0;top:0;font-size:28px;color:#0e0e12;"><span style="left:3104.9px;top:1470.7px;letter-spacing:-1.120px;">Jan </span><span style="left:3152.8px;top:1470.7px;letter-spacing:0.502px;">19, </span><span style="left:3197.5px;top:1470.7px;letter-spacing:0.983px;">1970</span></span>
<div style="left:722px;top:1518px;width:2652px;height:2px;background:#9a9ba2;"></div>
<a style="left:741.4px;top:1540.7px;font-size:28px;color:#3a6a93;letter-spacing:0.351px;">CVE-2015-20107</a>
<div style="left:1072px;top:1536px;width:72px;height:36px;background:#9e403a;border-radius:7px;"></div>
<span style="left:1085.6px;top:1545.2px;font-size:21px;color:#bcbcbc;letter-spacing:-0.674px;font-weight:700;">High</span>
<span style="left:1269.0px;top:1540.7px;font-size:28px;color:#0e0e12;letter-spacing:-0.183px;">8 / 7.6</span>
<span style="left:1555.5px;top:1540.7px;font-size:28px;color:#0e0e12;letter-spacing:0.262px;">High</span>
<span style="left:1814.5px;top:1540.7px;font-size:28px;color:#0e0e12;letter-spacing:0.000px;">-</span>
<span style="left:2041.2px;top:1540.7px;font-size:28px;color:#0e0e12;letter-spacing:0.174px;">python3-curses</span>
<span style="left:2377.3px;top:1540.7px;font-size:28px;color:#0e0e12;letter-spacing:-0.051px;">3.6.15-10.15.1</span>
<span style="left:2671.1px;top:1540.7px;font-size:28px;color:#0e0e12;letter-spacing:0.076px;">3.6.15-150300.10.27.1</span>
<span style="left:0;top:0;font-size:28px;color:#0e0e12;"><span style="left:3104.9px;top:1540.7px;letter-spacing:-1.120px;">Jan </span><span style="left:3152.8px;top:1540.7px;letter-spacing:0.502px;">19, </span><span style="left:3197.5px;top:1540.7px;letter-spacing:0.983px;">1970</span></span>
<div style="left:722px;top:1588px;width:2652px;height:2px;background:#9a9ba2;"></div>
<a style="left:741.4px;top:1610.7px;font-size:28px;color:#3a6a93;letter-spacing:0.351px;">CVE-2015-20107</a>
<div style="left:1072px;top:1606px;width:72px;height:36px;background:#9e403a;border-radius:7px;"></div>
<span style="left:1085.6px;top:1615.2px;font-size:21px;color:#bcbcbc;letter-spacing:-0.674px;font-weight:700;">High</span>
<span style="left:1269.0px;top:1610.7px;font-size:28px;color:#0e0e12;letter-spacing:-0.183px;">8 / 7.6</span>
<span style="left:1555.5px;top:1610.7px;font-size:28px;color:#0e0e12;letter-spacing:0.262px;">High</span>
<span style="left:1814.5px;top:1610.7px;font-size:28px;color:#0e0e12;letter-spacing:0.000px;">-</span>
<span style="left:2041.2px;top:1610.7px;font-size:28px;color:#0e0e12;letter-spacing:0.617px;">python3-dbm</span>
<span style="left:2377.3px;top:1610.7px;font-size:28px;color:#0e0e12;letter-spacing:-0.051px;">3.6.15-10.15.1</span>
<span style="left:2671.1px;top:1610.7px;font-size:28px;color:#0e0e12;letter-spacing:0.076px;">3.6.15-150300.10.27.1</span>
<span style="left:0;top:0;font-size:28px;color:#0e0e12;"><span style="left:3104.9px;top:1610.7px;letter-spacing:-1.120px;">Jan </span><span style="left:3152.8px;top:1610.7px;letter-spacing:0.502px;">19, </span><span style="left:3197.5px;top:1610.7px;letter-spacing:0.983px;">1970</span></span>
<div style="left:722px;top:1659px;width:2652px;height:2px;background:#9a9ba2;"></div>
<a style="left:741.4px;top:1681.7px;font-size:28px;color:#3a6a93;letter-spacing:0.342px;">CVE-2016-3709</a>
<div style="left:1072px;top:1677px;width:106px;height:36px;background:#b07c32;border-radius:7px;"></div>
<span style="left:1085.6px;top:1686.2px;font-size:21px;color:#bcbcbc;letter-spacing:-0.241px;font-weight:700;">Medium</span>
<span style="left:1269.5px;top:1681.7px;font-size:28px;color:#0e0e12;letter-spacing:-0.253px;">4 / 6.1</span>
<span style="left:1555.5px;top:1681.7px;font-size:28px;color:#0e0e12;letter-spacing:0.541px;">Medium</span>
<span style="left:1814.5px;top:1681.7px;font-size:28px;color:#0e0e12;letter-spacing:0.000px;">-</span>
<span style="left:2041.1px;top:1681.7px;font-size:28px;color:#0e0e12;letter-spacing:0.482px;">libxml2-2</span>
<span style="left:2376.9px;top:1681.7px;font-size:28px;color:#0e0e12;letter-spacing:-0.102px;">2.9.7-3.37.1</span>
<span style="left:2670.7px;top:1681.7px;font-size:28px;color:#0e0e12;letter-spacing:0.042px;">2.9.7-150000.3.51.1</span>
<span style="left:0;top:0;font-size:28px;color:#0e0e12;"><span style="left:3104.9px;top:1681.7px;letter-spacing:-1.120px;">Jan </span><span style="left:3152.8px;top:1681.7px;letter-spacing:0.502px;">19, </span><span style="left:3197.5px;top:1681.7px;letter-spacing:0.983px;">1970</span></span>
<div style="left:722px;top:1729px;width:2652px;height:2px;background:#9a9ba2;"></div>
<a style="left:741.4px;top:1751.7px;font-size:28px;color:#3a6a93;letter-spacing:0.342px;">CVE-2016-3709</a>
<div style="left:1072px;top:1747px;width:106px;height:36px;background:#b07c32;border-radius:7px;"></div>
<span style="left:1085.6px;top:1756.2px;font-size:21px;color:#bcbcbc;letter-spacing:-0.241px;font-weight:700;">Medium</span>
<span style="left:1269.5px;top:1751.7px;font-size:28px;color:#0e0e12;letter-spacing:-0.253px;">4 / 6.1</span>
<span style="left:1555.5px;top:1751.7px;font-size:28px;color:#0e0e12;letter-spacing:0.541px;">Medium</span>
<span style="left:1814.5px;top:1751.7px;font-size:28px;color:#0e0e12;letter-spacing:0.000px;">-</span>
<span style="left:2041.1px;top:1751.7px;font-size:28px;color:#0e0e12;letter-spacing:0.436px;">libxml2-tools</span>
<span style="left:2376.9px;top:1751.7px;font-size:28px;color:#0e0e12;letter-spacing:-0.102px;">2.9.7-3.37.1</span>
<span style="left:2670.7px;top:1751.7px;font-size:28px;color:#0e0e12;letter-spacing:0.042px;">2.9.7-150000.3.51.1</span>
<span style="left:0;top:0;font-size:28px;color:#0e0e12;"><span style="left:3104.9px;top:1751.7px;letter-spacing:-1.120px;">Jan </span><span style="left:3152.8px;top:1751.7px;letter-spacing:0.502px;">19, </span><span style="left:3197.5px;top:1751.7px;letter-spacing:0.983px;">1970</span></span>
<div style="left:722px;top:1799px;width:2652px;height:2px;background:#9a9ba2;"></div>
<a style="left:741.4px;top:1821.7px;font-size:28px;color:#3a6a93;letter-spacing:0.382px;">CVE-2017-17087</a>
<div style="left:1072px;top:1817px;width:106px;height:36px;background:#b07c32;border-radius:7px;"></div>
<span style="left:1085.6px;top:1826.2px;font-size:21px;color:#bcbcbc;letter-spacing:-0.241px;font-weight:700;">Medium</span>
<span style="left:1268.7px;top:1821.7px;font-size:28px;color:#0e0e12;letter-spacing:-0.388px;">2.1 / 5.5</span>
<span style="left:1555.5px;top:1821.7px;font-size:28px;color:#0e0e12;letter-spacing:0.541px;">Medium</span>
<span style="left:1814.5px;top:1821.7px;font-size:28px;color:#0e0e12;letter-spacing:0.000px;">-</span>
<span style="left:2042.9px;top:1821.7px;font-size:28px;color:#0e0e12;letter-spacing:0.463px;">vim</span>
<span style="left:2377.2px;top:1821.7px;font-size:28px;color:#0e0e12;letter-spacing:0.024px;">8.0.1568-5.14.1</span>
<span style="left:2671.0px;top:1821.7px;font-size:28px;color:#0e0e12;letter-spacing:0.106px;">8.2.5038-150000.5.21.1</span>
<span style="left:0;top:0;font-size:28px;color:#0e0e12;"><span style="left:3104.9px;top:1821.7px;letter-spacing:-1.120px;">Jan </span><span style="left:3152.8px;top:1821.7px;letter-spacing:0.502px;">19, </span><span style="left:3197.5px;top:1821.7px;letter-spacing:0.983px;">1970</span></span>
<div style="left:722px;top:1870px;width:2652px;height:2px;background:#9a9ba2;"></div>
<a style="left:741.4px;top:1892.7px;font-size:28px;color:#3a6a93;letter-spacing:0.382px;">CVE-2017-17087</a>
<div style="left:1072px;top:1888px;width:106px;height:36px;background:#b07c32;border-radius:7px;"></div>
<span style="left:1085.6px;top:1897.2px;font-size:21px;color:#bcbcbc;letter-spacing:-0.241px;font-weight:700;">Medium</span>
<span style="left:1268.7px;top:1892.7px;font-size:28px;color:#0e0e12;letter-spacing:-0.388px;">2.1 / 5.5</span>
<span style="left:1555.5px;top:1892.7px;font-size:28px;color:#0e0e12;letter-spacing:0.541px;">Medium</span>
<span style="left:1814.5px;top:1892.7px;font-size:28px;color:#0e0e12;letter-spacing:0.000px;">-</span>
<span style="left:2042.9px;top:1892.7px;font-size:28px;color:#0e0e12;letter-spacing:-0.038px;">vim-data</span>
<span style="left:2377.2px;top:1892.7px;font-size:28px;color:#0e0e12;letter-spacing:0.024px;">8.0.1568-5.14.1</span>
<span style="left:2671.0px;top:1892.7px;font-size:28px;color:#0e0e12;letter-spacing:0.106px;">8.2.5038-150000.5.21.1</span>
<span style="left:0;top:0;font-size:28px;color:#0e0e12;"><span style="left:3104.9px;top:1892.7px;letter-spacing:-1.120px;">Jan </span><span style="left:3152.8px;top:1892.7px;letter-spacing:0.502px;">19, </span><span style="left:3197.5px;top:1892.7px;letter-spacing:0.983px;">1970</span></span>
<div style="left:728px;top:773px;width:2000px;height:368px;background:#ffffff;border-left:10px solid #5496d1;border-radius:8px;"></div>
<h3 style="left:777.6px;top:817.3px;font-size:28px;color:#878787;letter-spacing:0.280px;">CVE-2014-9645</h3>
<svg style="left:988px;top:814px;" width="27" height="27" viewBox="0 0 27 27"><g fill="none" stroke="#5295d4" stroke-width="2.5" stroke-linecap="round" stroke-linejoin="round"><path d="M10.7,8.8 L1.5,8.8 L1.5,24.3 L20.5,24.3 L20.5,12.4"/><path d="M6.9,19.6 L24.2,2.4 M12.6,2.3 L24.4,2.3 L24.4,14"/></g></svg>
<div style="left:758px;top:880px;width:1950px;height:2px;background:#dcdee7;"></div>
<p style="left:0;top:0;font-size:28px;color:#6c6c76;"><span style="left:777.8px;top:918.8px;letter-spacing:-0.690px;">The </span><span style="left:830.1px;top:918.8px;letter-spacing:-0.625px;">add_probe </span><span style="left:965.4px;top:918.8px;letter-spacing:0.637px;">function </span><span style="left:1072.6px;top:918.8px;letter-spacing:1.120px;">in </span><span style="left:1100.2px;top:918.8px;letter-spacing:0.030px;">modutils/modprobe.c </span><span style="left:1366.0px;top:918.8px;letter-spacing:1.120px;">in </span><span style="left:1395.7px;top:918.8px;letter-spacing:-0.557px;">BusyBox </span><span style="left:1509.5px;top:918.8px;letter-spacing:0.204px;">before </span><span style="left:1597.0px;top:918.8px;letter-spacing:-0.612px;">1.23.0 </span><span style="left:1677.4px;top:918.8px;letter-spacing:-0.128px;">allows </span><span style="left:1760.0px;top:918.8px;letter-spacing:-0.060px;">local </span><span style="left:1822.8px;top:918.8px;letter-spacing:-0.875px;">users </span><span style="left:1893.3px;top:918.8px;letter-spacing:1.120px;">to </span><span style="left:1924.0px;top:918.8px;letter-spacing:-0.820px;">bypass </span><span style="left:2014.1px;top:918.8px;letter-spacing:0.274px;">intended </span><span style="left:2128.9px;top:918.8px;letter-spacing:0.520px;">restrictions </span><span style="left:2275.6px;top:918.8px;letter-spacing:-0.080px;">on </span><span style="left:2312.1px;top:918.8px;letter-spacing:-0.083px;">loading </span><span style="left:2407.4px;top:918.8px;letter-spacing:0.228px;">kernel </span><span style="left:2490.1px;top:918.8px;letter-spacing:-0.423px;">modules </span><span style="left:2598.3px;top:918.8px;letter-spacing:-1.120px;">via </span><span style="left:2636.6px;top:918.8px;letter-spacing:0.000px;">a </span><span style="left:2659.9px;top:918.8px;letter-spacing:0.000px;">/</span></p>
<p style="left:0;top:0;font-size:28px;color:#6c6c76;"><span style="left:777.5px;top:952.3px;letter-spacing:-0.947px;">(slash) </span><span style="left:860.9px;top:952.3px;letter-spacing:0.072px;">character </span><span style="left:983.7px;top:952.3px;letter-spacing:1.120px;">in </span><span style="left:1010.4px;top:952.3px;letter-spacing:0.000px;">a </span><span style="left:1030.3px;top:952.3px;letter-spacing:0.160px;">module </span><span style="left:1127.7px;top:952.3px;letter-spacing:-0.250px;">name, </span><span style="left:1206.3px;top:952.3px;letter-spacing:-1.120px;">as </span><span style="left:1238.8px;top:952.3px;letter-spacing:0.225px;">demonstrated </span><span style="left:1415.9px;top:952.3px;letter-spacing:-1.120px;">by </span><span style="left:1451.9px;top:952.3px;letter-spacing:-0.080px;">an </span><span style="left:1488.6px;top:952.3px;letter-spacing:0.317px;">&quot;ifconfig </span><span style="left:1596.5px;top:952.3px;letter-spacing:-0.173px;">/usbserial </span><span style="left:1719.6px;top:952.3px;letter-spacing:-0.410px;">up&quot; </span><span style="left:1766.3px;top:952.3px;letter-spacing:-0.670px;">command </span><span style="left:1891.1px;top:952.3px;letter-spacing:-1.120px;">or </span><span style="left:1922.5px;top:952.3px;letter-spacing:0.000px;">a </span><span style="left:1946.4px;top:952.3px;letter-spacing:-0.144px;">&quot;mount </span><span style="left:2040.5px;top:952.3px;letter-spacing:1.120px;">-t </span><span style="left:2066.1px;top:952.3px;letter-spacing:-0.929px;">/snd_pcm </span><span style="left:2185.7px;top:952.3px;letter-spacing:-0.287px;">none </span><span style="left:2254.1px;top:952.3px;letter-spacing:1.120px;">/&quot; </span><span style="left:2280.0px;top:952.3px;letter-spacing:-0.303px;">command.</span></p>
<button style="left:2555px;top:1041px;width:153px;height:80px;background:#5496d1;border-radius:7px;"></button>
<span style="left:2596.6px;top:1068.3px;font-size:28px;color:#ffffff;letter-spacing:-0.608px;">Close</span>
</div>
</body>
</html>
